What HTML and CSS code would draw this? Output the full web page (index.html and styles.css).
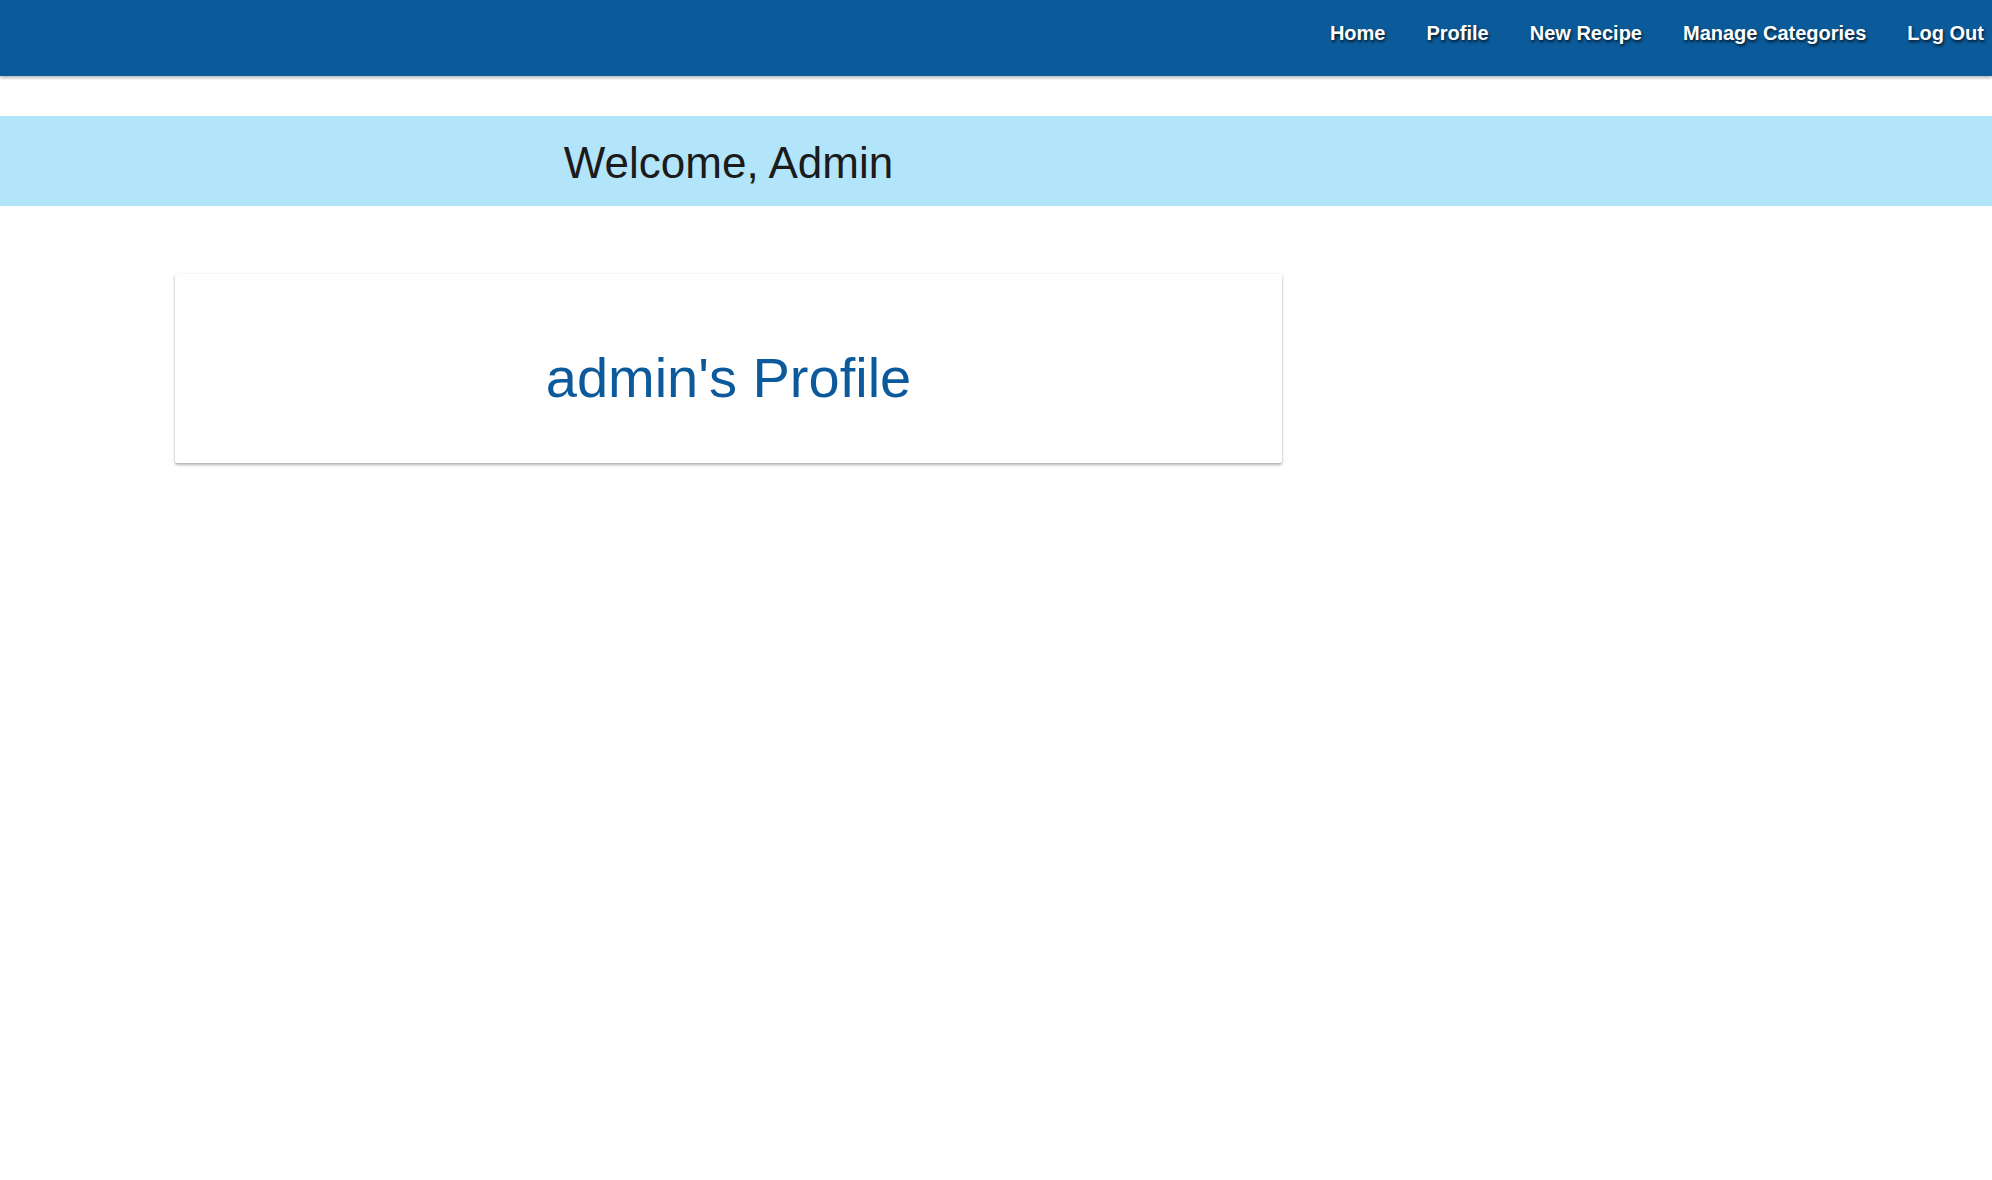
FILE: index.html
```html
<!DOCTYPE html>
<html lang="en">
<head>
<meta charset="utf-8">
<title>admin's Profile</title>
<link rel="stylesheet" href="styles.css">
</head>
<body>
<header class="navbar">
  <nav class="nav-links">
    <a href="#">Home</a>
    <a href="#">Profile</a>
    <a href="#">New Recipe</a>
    <a href="#">Manage Categories</a>
    <a href="#">Log Out</a>
  </nav>
</header>
<section class="welcome">
  <div class="container">
    <h2 class="welcome-title">Welcome, Admin</h2>
  </div>
</section>
<main class="container page-main">
  <div class="card">
    <h1 class="card-title">admin's Profile</h1>
  </div>
</main>
</body>
</html>
```

FILE: styles.css
```css
html, body {
  margin: 0;
  padding: 0;
  background: #ffffff;
  font-family: "Liberation Sans", Arial, sans-serif;
}

body {
  min-height: 100vh;
}

.navbar {
  height: 76px;
  background: #0b5a9a;
  box-shadow: 0 2px 3px rgba(0, 0, 0, 0.28);
  display: flex;
  justify-content: flex-end;
  align-items: flex-start;
}

.nav-links {
  display: flex;
  gap: 41px;
  padding-right: 8px;
}

.nav-links a {
  color: #ffffff;
  text-decoration: none;
  font-weight: bold;
  font-size: 20px;
  line-height: 66px;
  text-shadow: 1px 2px 3px rgba(0, 0, 0, 0.75);
}

.welcome {
  margin-top: 40px;
  background: #b3e5fa;
  padding: 21px 0 17px;
}

.container {
  width: 1107px;
  margin-left: 175px;
}

.page-main {
  padding-bottom: 40px;
}

.welcome-title {
  margin: 0;
  text-align: center;
  font-weight: normal;
  font-size: 44px;
  line-height: 52px;
  color: #1b1b1b;
}

.card {
  margin-top: 68px;
  background: #ffffff;
  border-radius: 2px;
  box-shadow: 0 2px 3px rgba(0, 0, 0, 0.3), 0 0 2px rgba(0, 0, 0, 0.08);
  padding: 72px 0 53px;
}

.card-title {
  margin: 0;
  text-align: center;
  font-weight: normal;
  font-size: 56px;
  line-height: 64px;
  color: #0c5a9b;
}
```
